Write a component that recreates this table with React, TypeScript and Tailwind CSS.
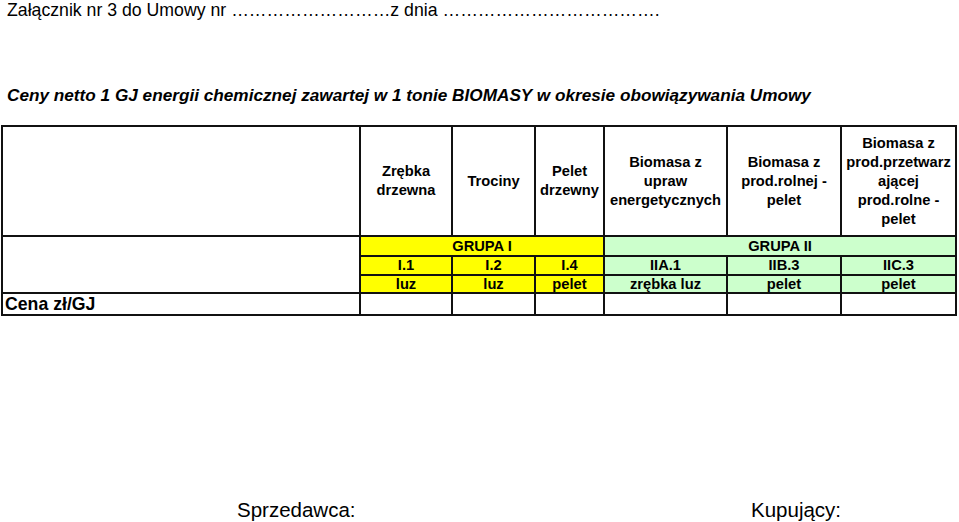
const font = { fontFamily: '"Liberation Sans", Arial, sans-serif' };

const headers: string[][] = [
  ["Zrębka", "drzewna"],
  ["Trociny"],
  ["Pelet", "drzewny"],
  ["Biomasa z", "upraw", "energetycznych"],
  ["Biomasa z", "prod.rolnej -", "pelet"],
  ["Biomasa z", "prod.przetwarz", "ającej", "prod.rolne -", "pelet"],
];

const codes = ["I.1", "I.2", "I.4", "IIA.1", "IIB.3", "IIC.3"];
const forms = ["luz", "luz", "pelet", "zrębka luz", "pelet", "pelet"];

function fill(i: number): string {
  return i < 3 ? "bg-[#ffff00]" : "bg-[#ccffcc]";
}

export default function App(): React.ReactElement {
  return (
    <div
      style={font}
      className="h-[522px] w-[959px] bg-white text-black flex flex-col overflow-hidden"
    >
      <p className="pl-[7px] text-[17.7px] leading-[20px] whitespace-nowrap">
        Załącznik nr 3 do Umowy nr {"…".repeat(9)}z dnia {"…".repeat(12)}.
      </p>

      <h1 className="mt-[65px] pl-[7px] text-[17.2px] leading-[20px] font-bold italic whitespace-nowrap">
        Ceny netto 1 GJ energii chemicznej zawartej w 1 tonie BIOMASY w okresie obowiązywania Umowy
      </h1>

      <div className="mt-[20px] ml-px w-[956px] grid grid-cols-[356px_90px_81px_67px_121px_112px_113px] grid-rows-[108px_18px_17px_16px_20px] gap-[2px] p-[2px] bg-[#111] text-[14.7px] font-bold">
        <div className="bg-white" />
        {headers.map((lines, i) => (
          <div
            key={i}
            className="bg-white flex flex-col items-center justify-center text-center leading-[19px]"
          >
            {lines.map((l) => (
              <span key={l} className="whitespace-nowrap">
                {l}
              </span>
            ))}
          </div>
        ))}

        <div className="bg-white row-span-3" />
        <div className="col-span-3 bg-[#ffff00] flex items-center justify-center leading-[17px]">
          GRUPA I
        </div>
        <div className="col-span-3 bg-[#ccffcc] flex items-center justify-center leading-[17px]">
          GRUPA II
        </div>

        {codes.map((c, i) => (
          <div
            key={c}
            className={`${fill(i)} flex items-center justify-center leading-[17px]`}
          >
            {c}
          </div>
        ))}
        {forms.map((f, i) => (
          <div
            key={i}
            className={`${fill(i)} flex items-end justify-center leading-[16px]`}
          >
            {f}
          </div>
        ))}

        <div className="bg-white flex items-center pl-[2px] text-[17.7px] leading-[20px]">
          Cena zł/GJ
        </div>
        {codes.map((c) => (
          <div key={c} className="bg-white" />
        ))}
      </div>

      <div className="mt-auto mb-[1px] pl-[237px] flex text-[20.5px] leading-[22px]">
        <span className="w-[514px]">Sprzedawca:</span>
        <span>Kupujący:</span>
      </div>
    </div>
  );
}
